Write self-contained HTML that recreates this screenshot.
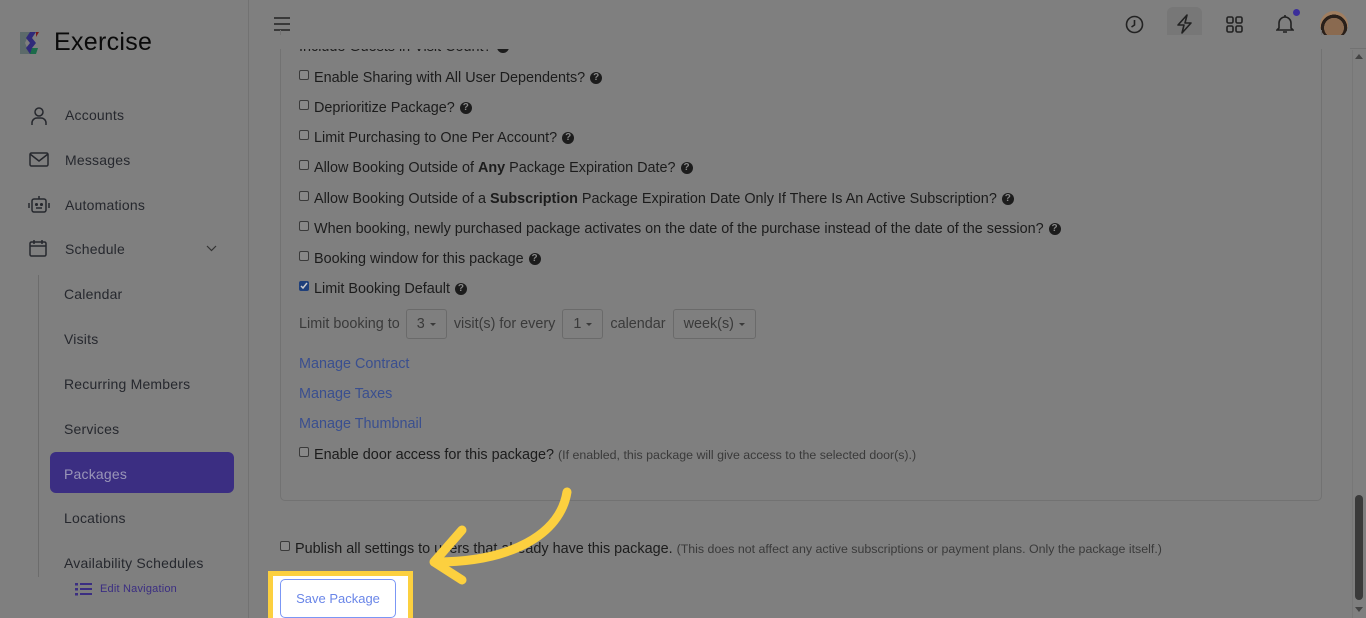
<!DOCTYPE html>
<html><head><meta charset="utf-8"><style>
*{box-sizing:border-box;margin:0;padding:0}
body{width:1366px;height:618px;overflow:hidden;background:#7f7f7f;font-family:"Liberation Sans",sans-serif;position:relative;color:#1c1c1c}
.sb{position:absolute;left:0;top:0;width:249px;height:618px;border-right:1px solid #727272}
.logo{position:absolute;left:18px;top:28px;display:flex;align-items:center}
.logo span{font-size:25px;color:#0a0a0a;margin-left:10px;letter-spacing:.3px}
.nav{position:absolute;left:0;font-size:14px;color:#26282e;letter-spacing:.2px}
.ic{position:absolute;left:29px}
.vline{position:absolute;left:38px;top:275px;width:1px;height:302px;background:#6c6c6c}
.top{position:absolute;left:250px;top:0;right:0;height:49px;border-bottom:1px solid #727272}
.row{position:absolute;left:299px;font-size:14.4px;display:flex;align-items:center;white-space:nowrap}
.cb{width:10px;height:10px;border:1px solid #3a3a3a;border-radius:2px;margin-right:5px;background:#888;position:relative;top:-3px}
.q{display:inline-block;width:12px;height:12px;border-radius:50%;background:#1c1c1c;color:#888;font-size:10px;font-weight:bold;text-align:center;line-height:12px;margin-left:5px}
.link{position:absolute;left:299px;font-size:14.4px;color:#3a4f8f}
.sel{display:inline-block;height:30px;border:1px solid #6a6a6a;border-radius:3px;line-height:28px;padding:0 10px;color:#3a3a3a;margin:0 7px}
.car{display:inline-block;border-left:3.5px solid transparent;border-right:3.5px solid transparent;border-top:3.5px solid #3a3a3a;vertical-align:middle;margin-left:5px}
.sm{font-size:12.4px;color:#3a3a3a}
</style></head><body>
<div class="sb">
 <div class="logo"><svg width="26" height="26" viewBox="0 0 26 26"><path d="M2 2h10l-5 11 5 11H2z" fill="#5c6a6a"/><path d="M12 2h6l-4 6 4 5-4 5 4 6h-6l-4-6 4-5-4-5z" fill="#302a7a"/><path d="M18 2h3l-3 5z" fill="#7a1a1a"/><path d="M14 18h6l-2 6h-6z" fill="#1c6b4a"/></svg><span>Exercise</span></div>
 <svg class="ic" style="top:106px" width="20" height="20" viewBox="0 0 20 20" fill="none" stroke="#26282e" stroke-width="1.5"><circle cx="10" cy="6" r="4"/><path d="M3 19v-2a5 5 0 0 1 5-5h4a5 5 0 0 1 5 5v2"/></svg>
 <div class="nav" style="left:65px;top:107px">Accounts</div>
 <svg class="ic" style="top:151px" width="20" height="18" viewBox="0 0 20 18" fill="none" stroke="#26282e" stroke-width="1.5"><rect x="1" y="2" width="18" height="13" rx="1.5"/><path d="M1 3l9 7 9-7"/></svg>
 <div class="nav" style="left:65px;top:152px">Messages</div>
 <svg class="ic" style="top:194px;left:27px" width="24" height="20" viewBox="0 0 24 20" fill="none" stroke="#26282e" stroke-width="1.5"><rect x="5" y="5" width="14" height="13" rx="2"/><path d="M12 5V2M2 9v5M22 9v5"/><circle cx="9.5" cy="10.5" r=".8" fill="#26282e"/><circle cx="14.5" cy="10.5" r=".8" fill="#26282e"/><path d="M9 14h6"/></svg>
 <div class="nav" style="left:65px;top:197px">Automations</div>
 <svg class="ic" style="top:239px" width="18" height="18" viewBox="0 0 18 18" fill="none" stroke="#26282e" stroke-width="1.5"><rect x="1" y="3" width="16" height="14" rx="1.5"/><path d="M1 7h16M5 1v4M13 1v4"/></svg>
 <div class="nav" style="left:65px;top:241px">Schedule</div>
 <svg style="position:absolute;left:206px;top:245px" width="11" height="7" viewBox="0 0 11 7" fill="none" stroke="#333" stroke-width="1.2"><path d="M1 1l4.5 4.5L10 1"/></svg>
 <div class="vline"></div>
 <div class="nav" style="left:64px;top:286px">Calendar</div>
 <div class="nav" style="left:64px;top:331px">Visits</div>
 <div class="nav" style="left:64px;top:376px">Recurring Members</div>
 <div class="nav" style="left:64px;top:421px">Services</div>
 <div style="position:absolute;left:50px;top:452px;width:184px;height:41px;background:#3b2e82;border-radius:6px"></div>
 <div class="nav" style="left:64px;top:466px;color:#9a96b8">Packages</div>
 <div class="nav" style="left:64px;top:510px">Locations</div>
 <div class="nav" style="left:64px;top:555px">Availability Schedules</div>
 <svg style="position:absolute;left:75px;top:582px" width="17" height="14" viewBox="0 0 17 14" fill="#3b2e82"><rect x="0" y="1" width="3" height="2.5"/><rect x="5" y="1" width="12" height="2"/><rect x="0" y="6" width="3" height="2.5"/><rect x="5" y="6" width="12" height="2"/><rect x="0" y="11" width="3" height="2.5"/><rect x="5" y="11" width="12" height="2"/></svg>
 <div class="nav" style="left:100px;top:583px;font-size:11px;color:#3b2e82">Edit Navigation</div>
</div>
<div class="top">
 <svg style="position:absolute;left:24px;top:17px" width="16" height="14" viewBox="0 0 16 14" stroke="#222" stroke-width="1.6"><path d="M0 1h16M0 7h16M0 13h16"/></svg>
 <svg style="position:absolute;left:875px;top:15px" width="19" height="19" viewBox="0 0 19 19" fill="none" stroke="#222" stroke-width="1.6"><circle cx="9.5" cy="9.5" r="8"/><path d="M9.5 5v5l-3 2"/></svg>
 <div style="position:absolute;left:917px;top:7px;width:35px;height:35px;background:#777;border-radius:6px"></div>
 <svg style="position:absolute;left:926px;top:14px" width="17" height="20" viewBox="0 0 17 20" fill="none" stroke="#222" stroke-width="1.6" stroke-linejoin="round"><path d="M11 1L2 11h6l-2 8 9-10H9z"/></svg>
 <svg style="position:absolute;left:976px;top:16px" width="17" height="17" viewBox="0 0 17 17" fill="none" stroke="#222" stroke-width="1.6"><rect x="1" y="1" width="6" height="6" rx="1.5"/><rect x="10" y="1" width="6" height="6" rx="1.5"/><rect x="1" y="10" width="6" height="6" rx="1.5"/><rect x="10" y="10" width="6" height="6" rx="1.5"/></svg>
 <svg style="position:absolute;left:1026px;top:14px" width="18" height="20" viewBox="0 0 18 20" fill="none" stroke="#222" stroke-width="1.6"><path d="M3 14V9a6 6 0 0 1 12 0v5l2 2H1z"/><path d="M7 18h4M9 1v2"/></svg>
 <div style="position:absolute;left:1043px;top:9px;width:7px;height:7px;border-radius:50%;background:#3b2e9a"></div>
 <div style="position:absolute;left:1070px;top:11px;width:28px;height:28px;border-radius:50%;background:radial-gradient(circle at 50% 60%,#8a6a50 0 45%,#2a201a 46% 60%,#a07e60 61%)"></div>
</div>
<div style="position:absolute;left:1352px;top:50px;width:14px;height:568px;border-left:1px solid #777"></div>
<div style="position:absolute;left:1355px;top:495px;width:8px;height:105px;background:#3a3a3a;border-radius:4px"></div>
<div style="position:absolute;left:1355px;top:54px;border-left:4px solid transparent;border-right:4px solid transparent;border-bottom:5px solid #444"></div>
<div style="position:absolute;left:1355px;top:607px;border-left:4px solid transparent;border-right:4px solid transparent;border-top:5px solid #444"></div>
<div style="position:absolute;left:280px;top:30px;width:1042px;height:471px;border:1px solid #727272;border-top:none;border-radius:0 0 5px 5px"></div>
<div class="row" style="top:39px">Include Guests in Visit Count?<span class="q">?</span></div>
<div style="position:absolute;left:250px;top:35px;width:1100px;height:14px;background:#7f7f7f"></div>
<div class="row" style="top:70px"><span class="cb"></span>Enable Sharing with All User Dependents?<span class="q">?</span></div>
<div class="row" style="top:100px"><span class="cb"></span>Deprioritize Package?<span class="q">?</span></div>
<div class="row" style="top:130px"><span class="cb"></span>Limit Purchasing to One Per Account?<span class="q">?</span></div>
<div class="row" style="top:160px"><span class="cb"></span>Allow Booking Outside of&nbsp;<b>Any</b>&nbsp;Package Expiration Date?<span class="q">?</span></div>
<div class="row" style="top:191px"><span class="cb"></span>Allow Booking Outside of a&nbsp;<b>Subscription</b>&nbsp;Package Expiration Date Only If There Is An Active Subscription?<span class="q">?</span></div>
<div class="row" style="top:221px"><span class="cb"></span>When booking, newly purchased package activates on the date of the purchase instead of the date of the session?<span class="q">?</span></div>
<div class="row" style="top:251px"><span class="cb"></span>Booking window for this package<span class="q">?</span></div>
<div class="row" style="top:281px"><span class="cb" style="background:#1f3f7a;border-color:#1f3f7a"><svg style="position:absolute;left:0;top:0" width="8" height="8" viewBox="0 0 8 8" fill="none" stroke="#ccc" stroke-width="1.5"><path d="M1 4l2 2 4-5"/></svg></span>Limit Booking Default<span class="q">?</span></div>
<div class="row" style="top:309px;color:#3a3a3a">Limit booking to<span class="sel" style="margin-left:6px">3<span class="car"></span></span>visit(s) for every<span class="sel">1<span class="car"></span></span>calendar<span class="sel">week(s)<span class="car"></span></span></div>
<div class="link" style="top:356px">Manage Contract</div>
<div class="link" style="top:386px">Manage Taxes</div>
<div class="link" style="top:416px">Manage Thumbnail</div>
<div class="row" style="top:447px"><span class="cb"></span>Enable door access for this package?&nbsp;<span class="sm">(If enabled, this package will give access to the selected door(s).)</span></div>
<div class="row" style="top:541px;left:280px"><span class="cb"></span>Publish all settings to users that already have this package.&nbsp;<span class="sm">(This does not affect any active subscriptions or payment plans. Only the package itself.)</span></div>
<div style="position:absolute;left:268px;top:571px;width:145px;height:47px;background:#fff;border:5px solid #fcd03f;border-bottom:none"></div>
<div style="position:absolute;left:280px;top:579px;width:116px;height:39px;border:1px solid #7b97f5;border-radius:5px;font-size:13px;color:#6a86e8;text-align:center;line-height:38px">Save Package</div>
<svg style="position:absolute;left:420px;top:480px" width="160" height="120" viewBox="0 0 160 120" fill="none" stroke="#fcd03f" stroke-width="9" stroke-linecap="round" stroke-linejoin="round"><path d="M147 12C140 55 90 82 16 82"/><path d="M42 50L14 82 42 100"/></svg>
</body></html>
